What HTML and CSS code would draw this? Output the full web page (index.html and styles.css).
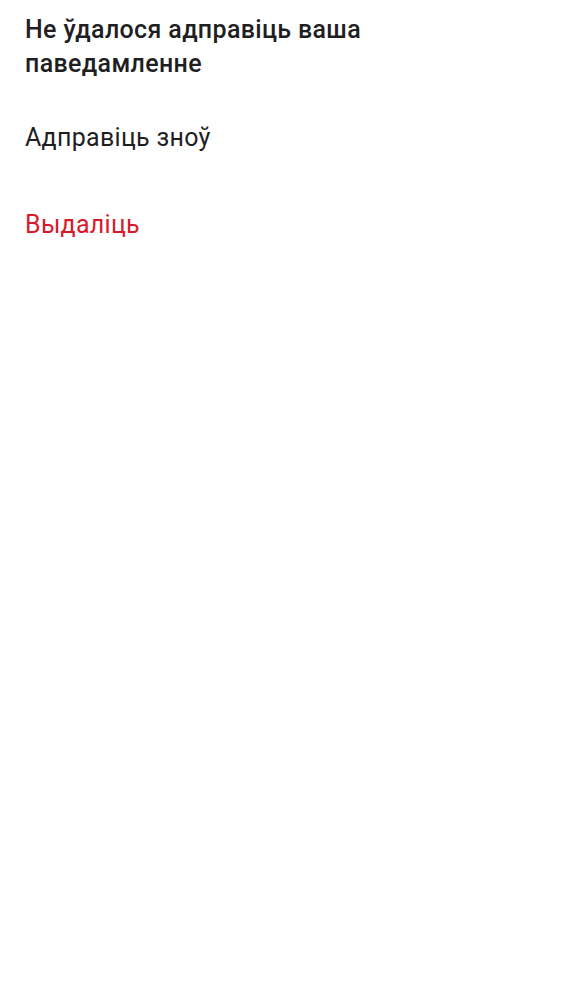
FILE: index.html
```html
<!DOCTYPE html>
<html lang="be">
<head>
<meta charset="utf-8">
<link rel="stylesheet" href="styles.css">
</head>
<body>
<div class="sheet">
  <h1 class="title">Не ўдалося адправіць ваша паведамленне</h1>
  <ul class="actions">
    <li class="action">Адправіць зноў</li>
    <li class="action danger">Выдаліць</li>
  </ul>
</div>
</body>
</html>
```
FILE: styles.css
```css
html, body {
  margin: 0;
  padding: 0;
  background: #ffffff;
}
body {
  font-family: Roboto, "Noto Sans", sans-serif;
  color: #1c1c1e;
}
.sheet {
  padding: 13px 24px 0 25px;
}
.title {
  margin: 0;
  width: 380px;
  font-size: 25px;
  font-weight: 500;
  line-height: 34px;
  letter-spacing: 0.35px;
  color: #1f1f23;
}
.actions {
  list-style: none;
  margin: 0;
  padding: 0;
  display: flex;
  flex-direction: column;
}
.action {
  font-size: 25px;
  line-height: 87px;
  color: #1f1f23;
  letter-spacing: 0.3px;
  margin-top: 13px;
}
.action + .action {
  margin-top: 0;
}
.danger {
  color: #d9192c;
}
```
